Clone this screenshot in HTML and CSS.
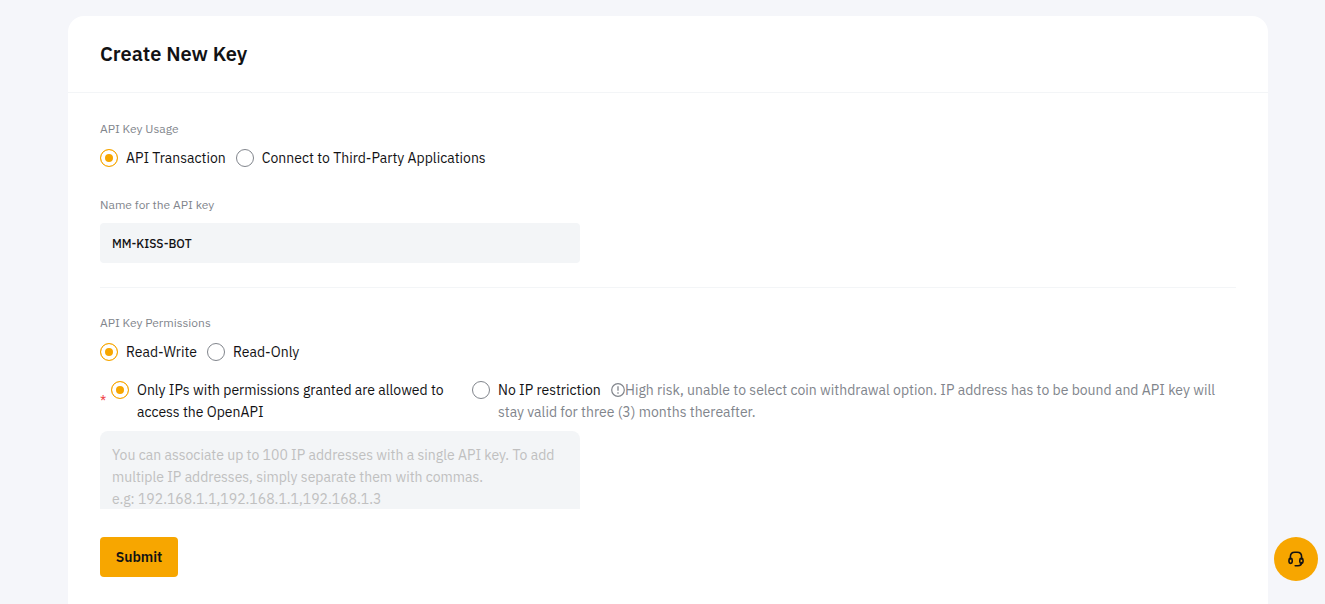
FILE: index.html
```html
<!DOCTYPE html>
<html lang="en">
<head>
<meta charset="utf-8">
<meta name="viewport" content="width=device-width, initial-scale=1">
<title>Create New Key</title>
<link rel="stylesheet" href="styles.css">
</head>
<body>
<main class="card">
  <header class="card-header"><h1 class="title">Create New Key</h1></header>
  <form class="form">
    <fieldset class="group">
      <legend class="caption">API Key Usage</legend>
      <div class="options">
        <label class="option"><input class="radio" type="radio" name="usage" checked><span>API Transaction</span></label>
        <label class="option"><input class="radio" type="radio" name="usage"><span>Connect to Third-Party Applications</span></label>
      </div>
    </fieldset>
    <div class="field">
      <label class="caption" for="key-name">Name for the API key</label>
      <input class="text-input" id="key-name" type="text" value="MM-KISS-BOT">
    </div>
    <hr class="divider">
    <fieldset class="group">
      <legend class="caption">API Key Permissions</legend>
      <div class="options">
        <label class="option"><input class="radio" type="radio" name="access" checked><span>Read-Write</span></label>
        <label class="option"><input class="radio" type="radio" name="access"><span>Read-Only</span></label>
      </div>
    </fieldset>
    <div class="ip-row">
      <span class="required">*</span>
      <label class="option"><input class="radio" type="radio" name="ip" checked><span>Only IPs with permissions granted are allowed to access the OpenAPI</span></label>
      <label class="option"><input class="radio" type="radio" name="ip"><span>No IP restriction <span class="risk"><svg class="warn" viewBox="0 0 14 14" aria-hidden="true"><circle cx="7" cy="7" r="6.3" fill="none" stroke="currentColor" stroke-width="1.2"/><path d="M7 3.3v4.5M7 9.2v1.5" fill="none" stroke="currentColor" stroke-width="1.3"/></svg>High risk, unable to select coin withdrawal option. IP address has to be bound and API key will stay valid for three (3) months thereafter.</span></span></label>
    </div>
    <textarea class="ip-list" aria-label="IP addresses" placeholder="You can associate up to 100 IP addresses with a single API key. To add multiple IP addresses, simply separate them with commas.&#10;e.g: 192.168.1.1,192.168.1.1,192.168.1.3"></textarea>
    <button class="submit" type="button">Submit</button>
  </form>
</main>
<button class="support" type="button" aria-label="Support">
  <svg class="support-icon" viewBox="0 0 16 16" fill="none" stroke="currentColor" stroke-width="1.6" stroke-linecap="round" aria-hidden="true"><path d="M2.4 8V5.8Q2.4 1.3 6.8 1.3h2.4q4.4 0 4.4 4.5V8M13.6 11.5q0 3.2-3.6 3.2H7.2"/><rect x="1" y="7.4" width="3.2" height="5" rx="1.6"/><rect x="11.8" y="7.4" width="3.2" height="5" rx="1.6"/></svg>
</button>
</body>
</html>
```
FILE: styles.css
```css
* { box-sizing: border-box; }
body {
  display: flex;
  min-height: 100vh;
  margin: 0;
  padding: 16px 57px 0 68px;
  background: #f5f6fa;
  color: #121214;
  font-family: "IBM Plex Sans", Roboto, "Liberation Sans", sans-serif;
  font-size: 14px;
  line-height: 22px;
}
.card {
  flex: 1;
  min-width: 0;
  background: #fff;
  border-radius: 16px 16px 0 0;
}
.card-header {
  padding: 24px 32px;
  border-bottom: 1px solid #f3f5f7;
}
.title {
  margin: 0;
  font-size: 20px;
  font-weight: 600;
  line-height: 28px;
}
.form {
  display: flex;
  flex-direction: column;
  padding: 26px 32px 24px;
}
.group {
  min-width: 0;
  margin: 0;
  padding: 0;
  border: 0;
}
.caption {
  display: block;
  padding: 0;
  color: #81858c;
  font-size: 12px;
  line-height: 20px;
}
.options {
  display: flex;
  flex-wrap: wrap;
  gap: 10px;
  padding-top: 8px;
}
.option {
  display: flex;
  gap: 8px;
}
.radio {
  appearance: none;
  flex: none;
  width: 18px;
  height: 18px;
  margin: 2px 0;
  border: 1px solid #81858c;
  border-radius: 50%;
  background: #fff;
}
.radio:checked {
  border-color: #f7a600;
  background: #f7a600;
  box-shadow: inset 0 0 0 4px #fff;
}
.field { margin-top: 26px; }
.text-input {
  display: block;
  width: 100%;
  max-width: 480px;
  height: 40px;
  margin-top: 8px;
  padding: 0 12px;
  border: 0;
  border-radius: 4px;
  background: #f3f5f7;
  color: #121214;
  font: inherit;
  font-size: 12px;
  font-weight: 500;
}
.divider {
  width: 100%;
  height: 1px;
  margin: 24px 0 25px;
  border: 0;
  background: #f3f5f7;
}
.ip-row {
  display: grid;
  grid-template-columns: 11px minmax(0, 351px) minmax(0, 1fr);
  margin-top: 16px;
}
.ip-row .option:last-child { padding-left: 10px; }
.required {
  align-self: center;
  color: #ef454a;
  font-size: 14px;
}
.risk {
  margin-left: 7px;
  color: #81858c;
}
.warn {
  width: 14px;
  height: 14px;
  vertical-align: -2px;
}
.ip-list {
  width: 100%;
  max-width: 480px;
  height: 78px;
  margin-top: 8px;
  padding: 13px 12px 0;
  overflow: hidden;
  border: 0;
  border-radius: 8px 8px 0 0;
  background: #f3f5f7;
  color: #121214;
  font: inherit;
  resize: none;
}
.ip-list::placeholder { color: #c0c0c0; }
.submit {
  align-self: flex-start;
  min-width: 78px;
  height: 40px;
  margin-top: 28px;
  padding: 0 15px;
  border: 0;
  border-radius: 4px;
  background: #f7a600;
  color: #121214;
  font: inherit;
  font-weight: 600;
}
.support {
  position: fixed;
  right: 7px;
  bottom: 23px;
  display: flex;
  align-items: center;
  justify-content: center;
  width: 44px;
  height: 44px;
  padding: 0;
  border: 0;
  border-radius: 50%;
  background: #f7a600;
  color: #121214;
}
.support-icon {
  width: 16px;
  height: 16px;
}
```
